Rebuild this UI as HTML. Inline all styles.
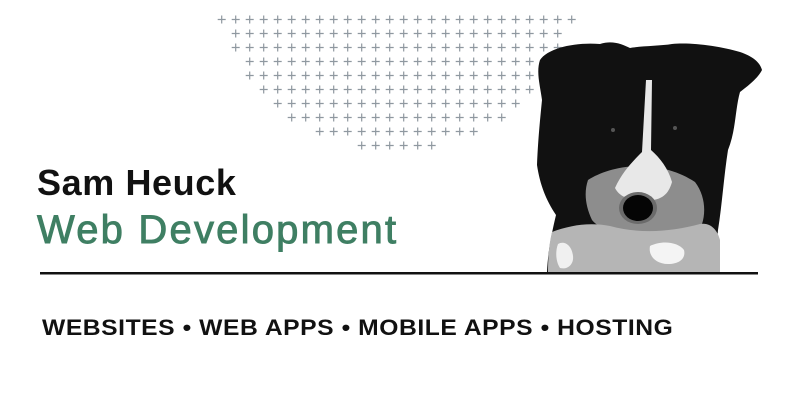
<!DOCTYPE html>
<html><head><meta charset="utf-8"><style>
html,body{margin:0;padding:0;background:#fff;width:800px;height:418px;overflow:hidden;position:relative;font-family:"Liberation Sans",sans-serif}
.t{position:absolute;white-space:nowrap;font-weight:bold}
</style></head><body>
<svg width="800" height="418" style="position:absolute;left:0;top:0">
<g id="grid" stroke="#8f98a0" stroke-width="1.2"></g>
</svg>
<svg width="800" height="418" style="position:absolute;left:0;top:0">
<path d="M540,60 C548,48 575,42 600,44 C612,40 622,44 630,48 C640,46 660,46 672,44 C690,42 720,46 740,52 C752,56 760,62 762,70 C758,78 748,86 740,92 C735,110 736,130 728,150 C724,175 722,205 718,230 C716,250 718,262 716,272 L547,272 C548,250 552,232 556,215 C546,200 540,185 537,165 C538,140 540,120 542,100 C540,85 536,72 540,60 Z" fill="#111"/>
<path d="M588,180 C600,172 620,166 640,166 C660,166 680,172 695,182 C705,195 706,212 702,224 C690,232 670,234 640,232 C615,234 598,228 592,220 C585,205 584,192 588,180 Z" fill="#8d8d8d"/>
<path d="M646,80 L652,80 L651,150 C660,158 668,168 672,182 C668,196 660,202 640,200 C625,200 618,194 615,188 C622,172 634,160 642,152 Z" fill="#e8e8e8"/>
<path d="M552,232 C570,225 590,222 610,226 C640,234 670,232 700,224 C712,222 718,232 720,240 L720,272 L548,272 C548,258 549,244 552,232 Z" fill="#b5b5b5"/>
<path d="M650,246 C662,240 678,242 684,250 C686,258 680,264 668,264 C656,264 648,256 650,246 Z" fill="#f4f4f4"/>
<path d="M558,244 C565,240 572,246 573,256 C574,264 568,270 560,268 C556,262 555,252 558,244 Z" fill="#f0f0f0"/>
<ellipse cx="638" cy="208" rx="19" ry="16" fill="#6b6b6b"/>
<ellipse cx="638" cy="208" rx="15" ry="13" fill="#050505"/>
<circle cx="613" cy="130" r="2" fill="#555"/><circle cx="675" cy="128" r="2" fill="#555"/>
<rect x="40" y="272" width="718" height="2.5" fill="#111"/>
</svg>
<div class="t" style="left:37px;top:162px;font-size:36px;color:#111;letter-spacing:0.6px">Sam Heuck</div>
<div class="t" style="left:37px;top:208px;font-size:40px;color:#3f7f63;font-weight:normal;letter-spacing:2.2px;-webkit-text-stroke:0.9px #3f7f63">Web Development</div>
<div class="t" style="left:42px;top:315px;font-size:22px;color:#111;letter-spacing:0.5px;transform:scaleX(1.12);transform-origin:0 0">WEBSITES • WEB APPS • MOBILE APPS • HOSTING</div>
<script>
var g=document.getElementById('grid'),rows=[[0,25],[1,24],[1,24],[2,23],[2,23],[3,22],[4,21],[5,20],[7,18],[10,15]],s='';
rows.forEach(function(r,i){var y=19.5+14*i;for(var k=r[0];k<=r[1];k++){var x=221.7+14*k;s+='<path d="M'+(x-4)+','+y+'H'+(x+4)+'M'+x+','+(y-4)+'V'+(y+4)+'"/>';}});
g.innerHTML=s;
</script>
</body></html>
